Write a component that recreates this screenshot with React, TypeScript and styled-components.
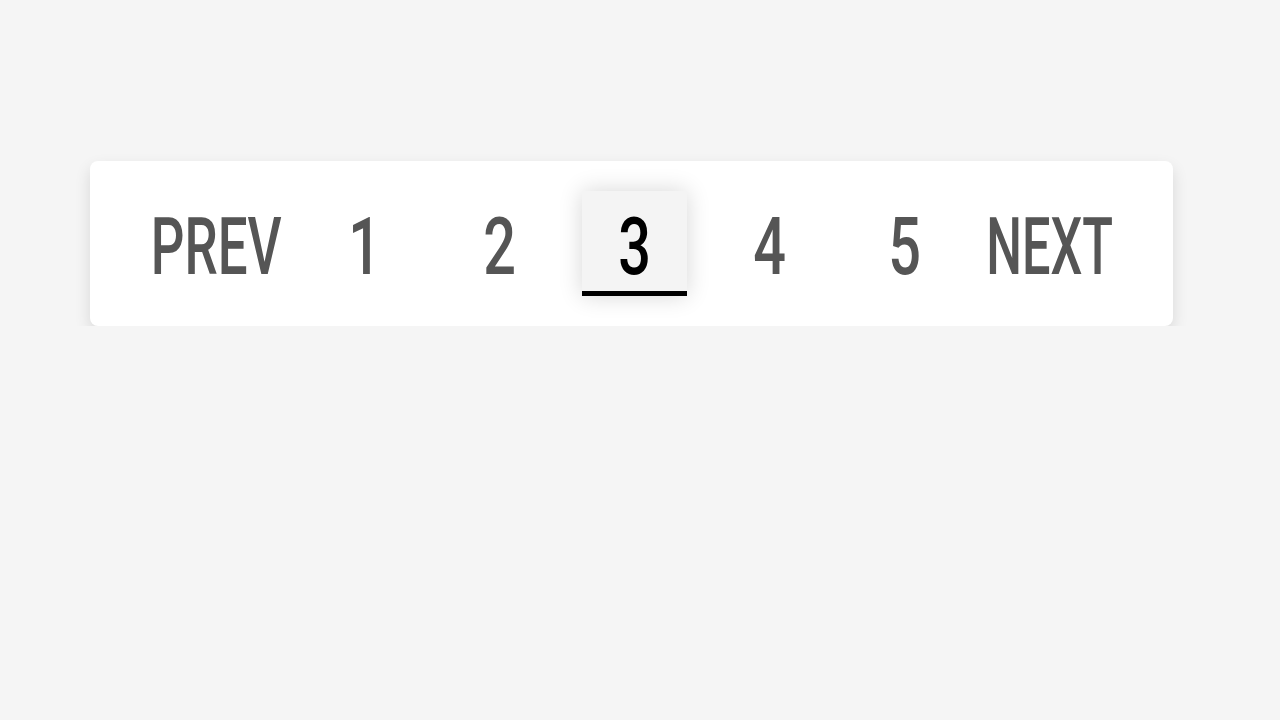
import React from 'react'
import styled, { createGlobalStyle } from 'styled-components'

const GlobalStyle = createGlobalStyle`
    html, body {
        margin: 0;
        padding: 0;
        background: #f5f5f5;
    }
    body {
        font-family: Roboto, "Liberation Sans", Arial, sans-serif;
    }
`

const pages = [1, 2, 3, 4, 5]
const current = 3

const App = () => {
    return (
        <>
            <GlobalStyle />
            <Page>
                <Pagination>
                    <Item $width={132}>
                        <Label $sx={0.66}>PREV</Label>
                    </Item>
                    {pages.map((p) => (
                        <Item key={p} $width={105} $active={p === current}>
                            <Label $sx={0.72}>{p}</Label>
                        </Item>
                    ))}
                    <Item $width={126}>
                        <Label $sx={0.63}>NEXT</Label>
                    </Item>
                </Pagination>
            </Page>
        </>
    )
}

const Page = styled.div`
    padding: 161px 90px 0 90px;
`

const Pagination = styled.nav`
    width: 1083px;
    box-sizing: border-box;
    background: #ffffff;
    border-radius: 8px;
    box-shadow: 0 7px 16px rgba(0, 0, 0, 0.12);
    padding: 30px 0;
    display: flex;
    justify-content: center;
    gap: 30px;
`

const Item = styled.a<{ $width: number; $active?: boolean }>`
    width: ${(p) => p.$width}px;
    height: 105px;
    flex: none;
    box-sizing: border-box;
    padding-top: 14px;
    display: flex;
    justify-content: center;
    align-items: flex-start;
    line-height: 85px;
    font-size: 80px;
    font-weight: 500;
    color: ${(p) => (p.$active ? '#000000' : '#555555')};
    background: ${(p) => (p.$active ? '#f4f4f4' : 'transparent')};
    border-bottom: 5px solid ${(p) => (p.$active ? '#000000' : 'transparent')};
    box-shadow: ${(p) => (p.$active ? '0 0 22px rgba(0, 0, 0, 0.16)' : 'none')};
    cursor: pointer;
    white-space: nowrap;
`

const Label = styled.span<{ $sx: number }>`
    display: inline-block;
    flex: none;
    transform: scaleX(${(p) => p.$sx});
    transform-origin: center;
`

export default App
